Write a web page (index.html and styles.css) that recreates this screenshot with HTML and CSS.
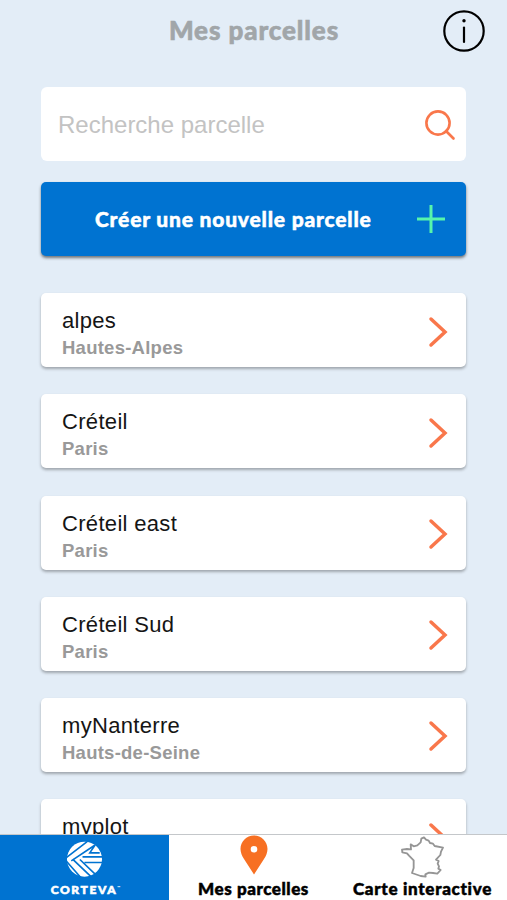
FILE: index.html
```
<!DOCTYPE html>
<html lang="fr">
<head>
<meta charset="utf-8">
<meta name="viewport" content="width=device-width, initial-scale=1">
<title>Mes parcelles</title>
<link rel="stylesheet" href="styles.css">
</head>
<body>
<div class="app">
  <header class="header">
    <h1 class="title">Mes parcelles</h1>
    <svg class="info" viewBox="0 0 42 42"><circle cx="21" cy="21" r="19.7"/><path d="M21 17.500v14.500"/><circle class="dot" cx="21" cy="10.700" r="1.700"/></svg>
  </header>
  <main class="main">
    <div class="search">
      <span class="placeholder">Recherche parcelle</span>
      <svg class="search-icon" viewBox="0 0 30 30"><circle cx="13" cy="13" r="11.6"/><path d="M21 21l7.500 7.500"/></svg>
    </div>
    <div class="create">
      <span class="create-label">Créer une nouvelle parcelle</span>
      <svg class="plus" viewBox="0 0 30 30"><path d="M15 1v28M1 15h28"/></svg>
    </div>
    <ul class="list">
      <li class="card"><div><div class="name">alpes</div><div class="place">Hautes-Alpes</div></div><svg class="chevron" viewBox="0 0 18 30"><path d="M2 2l14 13L2 28"/></svg></li>
      <li class="card"><div><div class="name">Créteil</div><div class="place">Paris</div></div><svg class="chevron" viewBox="0 0 18 30"><path d="M2 2l14 13L2 28"/></svg></li>
      <li class="card"><div><div class="name">Créteil east</div><div class="place">Paris</div></div><svg class="chevron" viewBox="0 0 18 30"><path d="M2 2l14 13L2 28"/></svg></li>
      <li class="card"><div><div class="name">Créteil Sud</div><div class="place">Paris</div></div><svg class="chevron" viewBox="0 0 18 30"><path d="M2 2l14 13L2 28"/></svg></li>
      <li class="card"><div><div class="name">myNanterre</div><div class="place">Hauts-de-Seine</div></div><svg class="chevron" viewBox="0 0 18 30"><path d="M2 2l14 13L2 28"/></svg></li>
      <li class="card last"><div><div class="name">myplot</div></div><svg class="chevron" viewBox="0 0 18 30"><path d="M2 2l14 13L2 28"/></svg></li>
    </ul>
  </main>
  <nav class="nav">
    <div class="tab brand">
      <svg class="globe" viewBox="200 62 112 112">
        <circle cx="256" cy="117" r="53"/>
        <path d="M200 113L264 64M216 122L288 74L272 98H302M250 110H314M256 127H314M220 117L278 172M202 124L246 174M242 118L292 166"/>
      </svg>
      <span class="brand-name">CORTEVA<small>™</small></span>
    </div>
    <div class="tab">
      <svg class="pin" viewBox="0 0 28 40"><path fill-rule="evenodd" d="M14 .5C6.500.5.5 6.500.5 14c0 3.500 1.500 7 3.500 10l10 15.500L24 24c2-3 3.500-6.500 3.500-10C27.500 6.500 21.500.5 14 .5zm0 10.500a3.300 3.300 0 1 1 0 6.600 3.300 3.300 0 0 1 0-6.600z"/></svg>
      <span class="tab-label">Mes parcelles</span>
    </div>
    <div class="tab">
      <svg class="france" viewBox="189 49 129 126"><path d="M258 53L264 60L272 63L276 70L285 72L290 79L315 84L309 96L307 106L294 120L302 124L299 132L303 140L301 147L308 151L298 162L285 160L273 159L262 164L263 171L248 169L222 160L227 145L227 122L213 108L207 101L193 98L192 90L207 88L219 89L218 74L227 80L238 77L248 68L250 57Z"/></svg>
      <span class="tab-label wide">Carte interactive</span>
    </div>
  </nav>
</div>
</body>
</html>
```
FILE: styles.css
```
* { box-sizing: border-box; }
body { margin: 0; background: #e3edf7; font-family: "Liberation Sans", Arial, sans-serif; }
svg { display: block; flex: none; fill: none; overflow: visible; }
.app { height: 900px; display: flex; flex-direction: column; overflow: hidden; }
.header { height: 87.4px; flex: none; display: grid; grid-template-columns: 42px 1fr 42px; padding: 10px 22px 0 0; }
.title { grid-column: 2; margin: 0; padding-left: 23px; text-align: center; font: 900 26px/40px Lato, sans-serif; letter-spacing: 0.9px; -webkit-text-stroke: 0.6px; color: #a1a6a9; white-space: nowrap; }
.info { width: 42px; height: 42px; stroke: #000; stroke-width: 2.2; stroke-linecap: round; }
.info .dot { fill: #000; stroke: none; }
.main { flex: 1; min-height: 0; overflow: hidden; padding: 0 41px; }
.search { height: 74px; border-radius: 6px; background: #fff; display: flex; align-items: center; justify-content: space-between; padding: 2px 11px 0 17px; }
.placeholder { font-size: 24px; color: #c3c3c3; }
.search-icon { width: 30px; height: 30px; stroke: #f9774b; stroke-width: 2.6; stroke-linecap: round; }
.create { height: 74px; margin-top: 20.4px; border-radius: 5px; background: #0073d1; display: flex; align-items: center; justify-content: space-between; padding: 0 20px 0 54px; box-shadow: 0 2px 3px #00000080; }
.create-label { font: 900 21px/30px Lato, sans-serif; letter-spacing: 0.8px; -webkit-text-stroke: 0.5px; color: #fff; white-space: nowrap; }
.plus { width: 30px; height: 30px; stroke: #57f5ab; stroke-width: 3; }
.list { list-style: none; margin: 37.4px 0 0; padding: 0; display: grid; row-gap: 27.2px; }
.card { height: 74px; border-radius: 5px; background: #fff; display: flex; align-items: center; justify-content: space-between; padding: 3px 19px 0 21px; box-shadow: 0 2px 3px #0000004d; }
.card > div { padding-top: 6px; }
.last { align-items: flex-start; }
.last > div { padding-top: 12px; }
.last .chevron { margin-top: 21px; }
.name { font-size: 22px; line-height: 26px; letter-spacing: 0.32px; color: #151515; }
.place { font-size: 18.5px; line-height: 27px; font-weight: 700; letter-spacing: 0.25px; color: #999; }
.chevron { width: 18px; height: 30px; stroke: #f9774b; stroke-width: 3.5; stroke-linecap: round; }
.nav { height: 66px; flex: none; display: grid; grid-template-columns: 169px 169px 169px; background: #fff; border-top: 1px solid #c4c7ca; z-index: 1; }
.tab { display: flex; flex-direction: column; align-items: center; position: relative; }
.brand { background: #0073d1; padding-top: 6px; }
.globe { width: 37px; height: 37px; fill: #fff; }
.globe path { fill: none; stroke: #0073d1; stroke-width: 5; }
.brand-name { font: 900 12px/14px Lato, sans-serif; letter-spacing: 1.6px; -webkit-text-stroke: 0.6px; color: #fff; margin: 3px 0 0 2px; white-space: nowrap; }
.brand-name small { font-size: 4px; vertical-align: 5px; letter-spacing: 0; -webkit-text-stroke: 0; }
.pin { width: 28px; height: 40px; fill: #f77023; }
.france { width: 43px; height: 42px; stroke: #959595; stroke-width: 5.5; stroke-linejoin: round; margin-top: 1px; }
.tab-label { font: 900 17px/20px Lato, sans-serif; letter-spacing: 0.55px; -webkit-text-stroke: 0.5px; color: #000; margin-top: 4px; white-space: nowrap; }
.tab-label.wide { margin-top: 1px; letter-spacing: 0.7px; }
```
